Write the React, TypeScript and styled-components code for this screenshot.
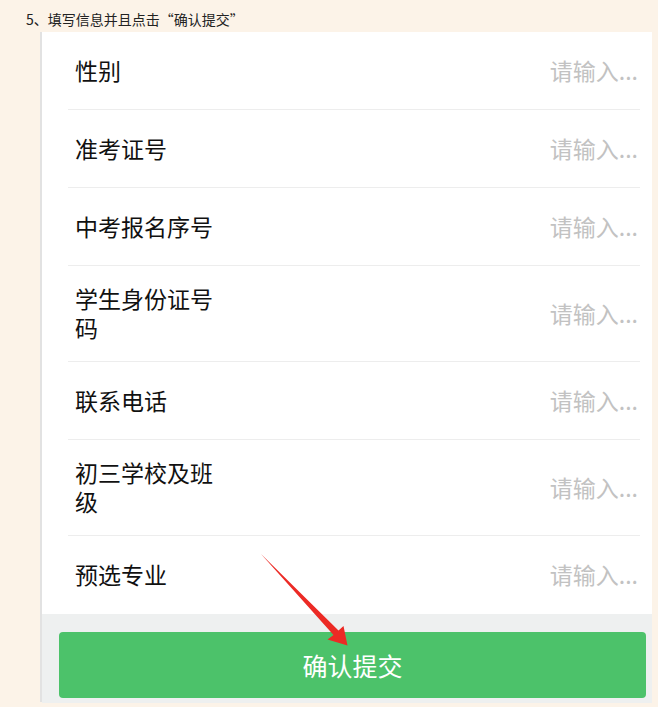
import React from "react";
import styled, { createGlobalStyle } from "styled-components";

const Global = createGlobalStyle`
  html, body {
    margin: 0;
    padding: 0;
    background: #fcf3e8;
  }
  body {
    font-family: "Noto Sans CJK SC", "Noto Sans", sans-serif;
  }
`;

const Page = styled.div`
  position: relative;
  width: 658px;
  height: 707px;
  overflow: hidden;
  background: #fcf3e8;
`;

const Caption = styled.div`
  padding: 9px 0 0 26px;
  height: 24px;
  box-sizing: border-box;
  font-size: 14px;
  line-height: 20px;
  color: #222;
`;

const Panel = styled.div`
  margin: 8px 0 0 40px;
  width: 612px;
  height: 670px;
  box-sizing: border-box;
  border-left: 2px solid #e2e2e2;
  background: #ffffff;
  display: flex;
  flex-direction: column;
`;

const List = styled.div`
  padding: 0 12px 0 26px;
  flex: 1;
`;

const Row = styled.label<{ $last?: boolean }>`
  display: flex;
  align-items: center;
  box-sizing: border-box;
  min-height: 78px;
  padding: 18px 0 19px 7px;
  border-bottom: ${(p) => (p.$last ? "none" : "1px solid #ededed")};
`;

const Label = styled.span`
  width: 145px;
  flex: none;
  font-size: 23px;
  line-height: 29px;
  color: #111;
`;

const Field = styled.input`
  flex: 1;
  min-width: 0;
  border: none;
  outline: none;
  background: transparent;
  text-align: right;
  padding: 0 2px 0 0;
  font-family: "Noto Sans CJK SC", sans-serif;
  font-size: 23px;
  line-height: 29px;
  color: #333;
  &::placeholder {
    color: #c2c2c2;
  }
`;

const Footer = styled.div`
  background: #eef0f0;
  padding: 18px 6px 5px 17px;
`;

const Submit = styled.button`
  display: block;
  width: 100%;
  height: 66px;
  border: none;
  border-radius: 4px;
  background: #4cc26a;
  color: #ffffff;
  font-family: "Noto Sans CJK SC", sans-serif;
  font-size: 25px;
  cursor: pointer;
`;

const Arrow = styled.svg`
  position: absolute;
  left: 0;
  top: 0;
  pointer-events: none;
`;

const fields = [
  "性别",
  "准考证号",
  "中考报名序号",
  "学生身份证号码",
  "联系电话",
  "初三学校及班级",
  "预选专业",
];

export default function App() {
  return (
    <Page>
      <Global />
      <Caption>5、填写信息并且点击“确认提交”</Caption>
      <Panel>
        <List>
          {fields.map((f, i) => (
            <Row key={f} $last={i === fields.length - 1}>
              <Label>{f}</Label>
              <Field placeholder="请输入..." />
            </Row>
          ))}
        </List>
        <Footer>
          <Submit>确认提交</Submit>
        </Footer>
      </Panel>
      <Arrow width="658" height="707" viewBox="0 0 658 707">
        <polygon
          points="261,554 338.5,630.5 343.5,626 347.5,645.5 327.5,639.5 333.5,635"
          fill="#ec2a25"
        />
      </Arrow>
    </Page>
  );
}
